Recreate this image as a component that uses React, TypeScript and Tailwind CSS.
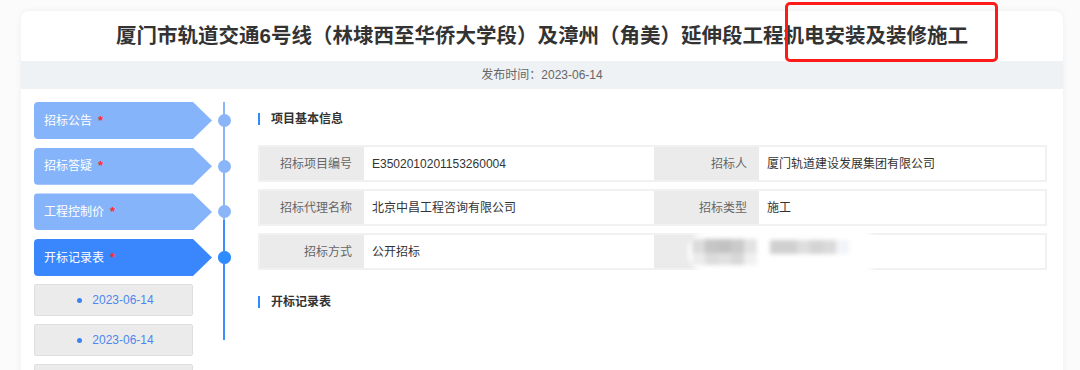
import React from "react";

const font = "font-['Liberation_Sans','Noto_Sans_CJK_SC',sans-serif]";

const tabs = [
  { label: "招标公告", active: false },
  { label: "招标答疑", active: false },
  { label: "工程控制价", active: false },
  { label: "开标记录表", active: true },
];

function Tab({ label, active }: { label: string; active: boolean }) {
  return (
    <div className="flex items-center h-[37px]">
      <div
        className={`w-[178px] h-[37px] rounded-l-[4px] flex items-center pl-[10px] text-[12px] text-white ${
          active ? "bg-[#3a87fd]" : "bg-[#86b4fa]"
        } [clip-path:polygon(0_0,calc(100%-19px)_0,100%_50%,calc(100%-19px)_100%,0_100%)]`}
      >
        <span>{label}</span>
        <span className="ml-[6px] text-[#ff2d2d] text-[13px] font-bold">*</span>
      </div>
      <div className="ml-[6px] w-[13px] h-[13px] rounded-full relative z-10 bg-[#8ab6f9]">
        {active && <div className="absolute inset-0 rounded-full bg-[#2f8cff]" />}
      </div>
    </div>
  );
}

function DateBtn({ empty }: { empty?: boolean }) {
  return (
    <div className="w-[159px] h-[32px] bg-[#ebebeb] border border-[#dedede] rounded-[2px] flex items-center justify-center text-[12px] text-[#4e86ef]">
      {!empty && (
        <>
          <span className="w-[5px] h-[5px] rounded-full bg-[#3d82f3] mr-[10px] ml-[4px]" />
          <span>2023-06-14</span>
        </>
      )}
    </div>
  );
}

function SectionHead({ title }: { title: string }) {
  return (
    <div className="flex items-center h-[34px]">
      <div className="w-[2px] h-[12px] bg-[#2f8cff]" />
      <div className="ml-[11px] text-[12px] font-bold text-[#333]">{title}</div>
    </div>
  );
}

function Cell({ label, value, w }: { label: string; value: React.ReactNode; w?: string }) {
  return (
    <>
      <div className={`${w ?? "w-[104px]"} h-full bg-[#ebebeb] flex items-center justify-end pr-[12px] text-[12px] text-[#666]`}>
        {label}
      </div>
      <div className="flex-1 h-full bg-white flex items-center pl-[8px] text-[12px] text-[#333]">{value}</div>
    </>
  );
}

function Row({ a, b, c, d, blur }: { a: string; b: string; c: string; d: string; blur?: boolean }) {
  return (
    <div className="relative flex h-[37px] border-2 border-[#f1f1f1]">
      <div className="flex w-[394px] h-full">
        <Cell label={a} value={b} />
      </div>
      <div className="flex flex-1 h-full">
        <Cell label={c} value={d} w="w-[105px]" />
      </div>
      {blur && (
        <div className="absolute left-[428px] top-[-4px] w-[192px] h-[42px] bg-white rounded-[20px] blur-[2px] flex items-center">
          <div className="ml-[4px] flex flex-col gap-0">
            <div className="flex">
              <div className="w-[13px] h-[14px] bg-[#dcdcdc]" />
              <div className="w-[13px] h-[14px] bg-[#c6c6c6]" />
              <div className="w-[13px] h-[14px] bg-[#c2c2c2]" />
              <div className="w-[13px] h-[14px] bg-[#cacaca]" />
              <div className="w-[13px] h-[14px] bg-[#e2e2e2]" />
            </div>
            <div className="flex">
              <div className="w-[13px] h-[12px] bg-[#ececec]" />
              <div className="w-[13px] h-[12px] bg-[#dcdcdc]" />
              <div className="w-[13px] h-[12px] bg-[#e0e0e0]" />
              <div className="w-[13px] h-[12px] bg-[#d8d8d8]" />
              <div className="w-[13px] h-[12px] bg-[#f0f0f0]" />
            </div>
          </div>
          <div className="ml-[13px] -mt-[10px] flex">
            <div className="w-[27px] h-[14px] bg-[#d0d0d0]" />
            <div className="w-[13px] h-[14px] bg-[#dedede]" />
            <div className="w-[13px] h-[14px] bg-[#d4d4d4]" />
            <div className="w-[13px] h-[14px] bg-[#dadada]" />
            <div className="w-[13px] h-[14px] bg-[#f1f4f8]" />
          </div>
        </div>
      )}
    </div>
  );
}

export default function App() {
  return (
    <div className={`relative w-[1080px] h-[370px] overflow-hidden bg-[#fbfbfc] ${font}`}>
      <div className="ml-[21px] mt-[11px] w-[1042px] h-[400px] bg-white rounded-[8px] shadow-[0_0_6px_rgba(0,0,0,0.06)] overflow-hidden">
        <div className="h-[50px] flex items-center justify-center">
          <h1 className="text-[20.5px] font-bold text-[#333]">
            厦门市轨道交通6号线（林埭西至华侨大学段）及漳州（角美）延伸段工程机电安装及装修施工
          </h1>
        </div>
        <div className="h-[28px] bg-[#eef2f5] flex items-center justify-center text-[12px] text-[#666]">
          发布时间：2023-06-14
        </div>
        <div className="flex pl-[13px] pt-[13px]">
          <div className="relative w-[197px] flex flex-col">
            <div className="absolute left-[189px] top-[0px] w-[2px] h-[118px] bg-[#8ab6f9]" />
            <div className="absolute left-[189px] top-[118px] w-[2px] h-[120px] bg-[#3d8ffd]" />
            <div className="flex flex-col gap-[8.7px]">
              {tabs.map((t) => (
                <Tab key={t.label} label={t.label} active={t.active} />
              ))}
            </div>
            <div className="mt-[8px] flex flex-col gap-[8px]">
              <DateBtn />
              <DateBtn />
              <DateBtn empty />
            </div>
          </div>
          <div className="ml-[27px] w-[789px] flex flex-col">
            <SectionHead title="项目基本信息" />
            <div className="mt-[9px] flex flex-col gap-[7px]">
              <Row a="招标项目编号" b="E3502010201153260004" c="招标人" d="厦门轨道建设发展集团有限公司" />
              <Row a="招标代理名称" b="北京中昌工程咨询有限公司" c="招标类型" d="施工" />
              <Row a="招标方式" b="公开招标" c="" d="" blur />
            </div>
            <div className="mt-[15px]">
              <SectionHead title="开标记录表" />
            </div>
          </div>
        </div>
      </div>
      <div className="absolute left-[785px] top-[2px] w-[213px] h-[60px] border-[3px] border-[#ff1a1a] rounded-[5px]" />
    </div>
  );
}
